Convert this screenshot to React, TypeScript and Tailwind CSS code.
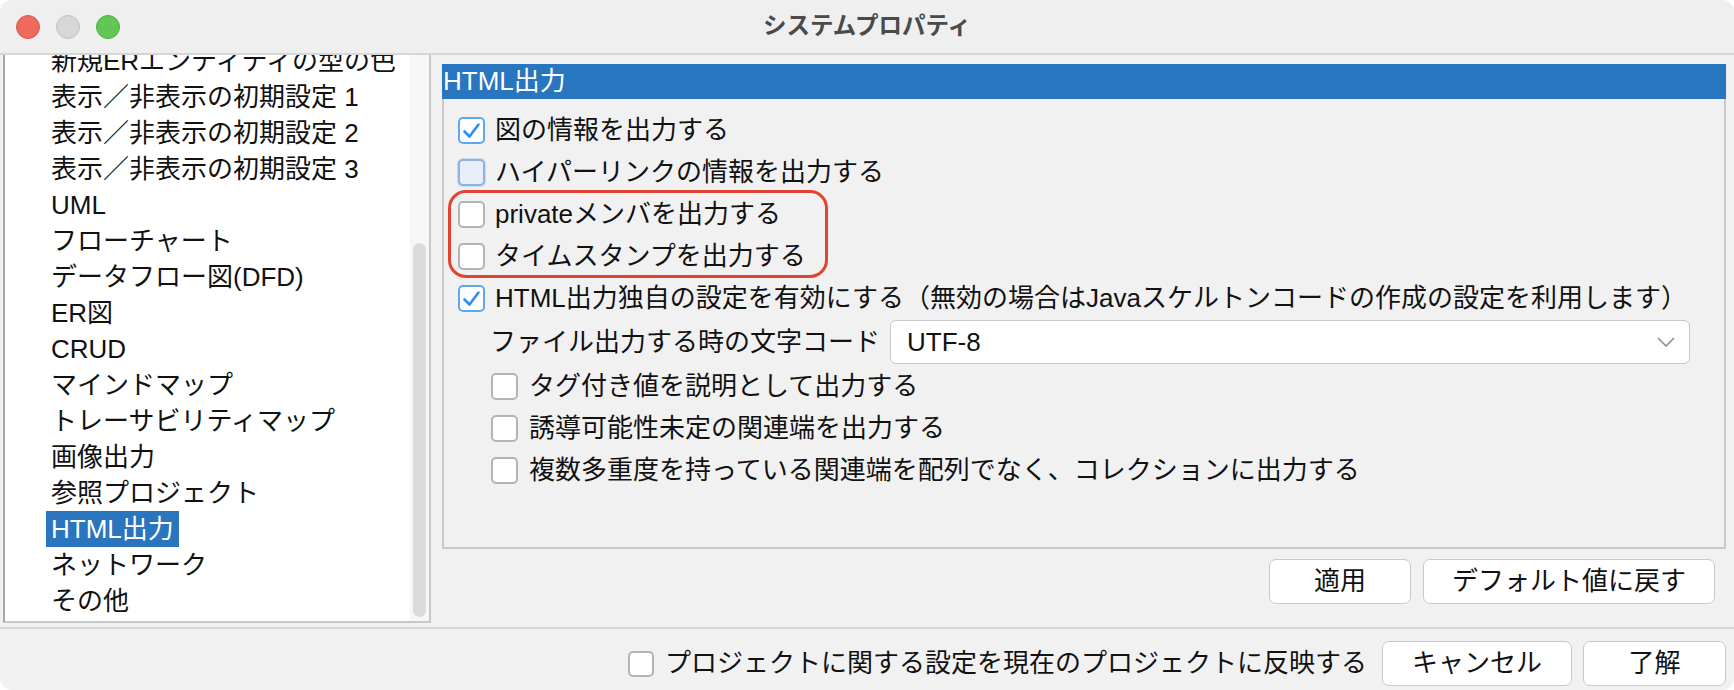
import React from "react";

const FONT = { fontFamily: '"Liberation Sans", "Noto Sans CJK JP", sans-serif' };

const listItems = [
  "新規ERエンティティの型の色",
  "表示／非表示の初期設定 1",
  "表示／非表示の初期設定 2",
  "表示／非表示の初期設定 3",
  "UML",
  "フローチャート",
  "データフロー図(DFD)",
  "ER図",
  "CRUD",
  "マインドマップ",
  "トレーサビリティマップ",
  "画像出力",
  "参照プロジェクト",
  "HTML出力",
  "ネットワーク",
  "その他",
];

function Check() {
  return (
    <svg width="19" height="17" viewBox="0 0 19 17" fill="none">
      <path d="M2.5 9.5 L7.5 14.5 L16.5 2.5" stroke="#2f8cf0" strokeWidth="2.6" strokeLinecap="round" strokeLinejoin="round" />
    </svg>
  );
}

function Box({ kind }: { kind: "checked" | "focus" | "plain" }) {
  if (kind === "checked") {
    return (
      <span className="w-[27px] h-[27px] shrink-0 rounded-[5px] border-2 border-[#5ea8f2] bg-white flex items-center justify-center">
        <Check />
      </span>
    );
  }
  if (kind === "focus") {
    return (
      <span className="w-[27px] h-[27px] shrink-0 rounded-[5px] border-2 border-[#8fb3de] bg-[#e8eff9] ring-1 ring-[#c9dbf0]" />
    );
  }
  return <span className="w-[27px] h-[27px] shrink-0 rounded-[5px] border-2 border-[#b4b4b4] bg-white" />;
}

function Row({ kind, text, indent }: { kind: "checked" | "focus" | "plain"; text: string; indent?: boolean }) {
  return (
    <div className={indent ? "h-[42px] flex items-center pl-[33px] gap-[11px]" : "h-[42px] flex items-center gap-[10px]"}>
      <Box kind={kind} />
      <span className="leading-[42px] whitespace-nowrap">{text}</span>
    </div>
  );
}

function Button({ label, w }: { label: string; w: string }) {
  return (
    <div
      className={
        "h-[45px] rounded-[7px] border-[1.5px] border-[#c8c8c8] bg-white flex items-center justify-center text-[#111] whitespace-nowrap " + w
      }
    >
      {label}
    </div>
  );
}

export default function App() {
  return (
    <div className="w-[1734px] h-[690px] bg-white overflow-hidden" style={FONT}>
      <div className="w-full h-full rounded-[12px] overflow-hidden bg-[#f1f1f1] flex flex-col text-[26px] text-[#111]">
        {/* title bar */}
        <div className="h-[55px] shrink-0 bg-[#efefef] border-b-2 border-[#d6d6d6] flex items-center">
          <div className="w-[120px] pl-[16px] flex items-center gap-[16px]">
            <span className="w-[24px] h-[24px] rounded-full bg-[#ee6a5f] border border-[#d85b50]" />
            <span className="w-[24px] h-[24px] rounded-full bg-[#d7d7d7] border border-[#c2c2c2]" />
            <span className="w-[24px] h-[24px] rounded-full bg-[#62c655] border border-[#53ad45]" />
          </div>
          <div className="flex-1 text-center font-bold text-[23.5px] text-[#4a4a4a] leading-[53px]">システムプロパティ</div>
          <div className="w-[120px]" />
        </div>

        {/* main */}
        <div className="h-[572px] shrink-0 flex">
          {/* left list */}
          <div className="ml-[3px] w-[428px] h-[568px] border-l-2 border-l-[#a9a9a9] border-r-2 border-r-[#c8c8c8] border-b-2 border-b-[#c8c8c8] flex">
            <div className="flex-1 bg-white overflow-hidden">
              <div className="-mt-[12px]">
                {listItems.map((t) => (
                  <div key={t} className="h-[36px] flex items-center">
                    {t === "HTML出力" ? (
                      <span className="ml-[41px] px-[5px] bg-[#2a75be] text-white leading-[36px] whitespace-nowrap">{t}</span>
                    ) : (
                      <span className="ml-[41px] px-[5px] leading-[36px] whitespace-nowrap">{t}</span>
                    )}
                  </div>
                ))}
              </div>
            </div>
            <div className="w-[19px] bg-[#f6f6f6] flex justify-center pt-[188px] pb-[4px]">
              <div className="w-[13px] h-full rounded-full bg-[#dadada]" />
            </div>
          </div>

          {/* right */}
          <div className="flex-1 flex flex-col pl-[11px] pr-[8px] pt-[9px]">
            <div className="h-[35px] bg-[#2876bf] text-white leading-[35px] pl-[1px] whitespace-nowrap">HTML出力</div>
            <div className="relative h-[450px] border-x-2 border-b-2 border-[#c9c9c9] pl-[14px] pt-[10px] flex flex-col">
              <Row kind="checked" text="図の情報を出力する" />
              <Row kind="focus" text="ハイパーリンクの情報を出力する" />
              <Row kind="plain" text="privateメンバを出力する" />
              <Row kind="plain" text="タイムスタンプを出力する" />
              <Row kind="checked" text="HTML出力独自の設定を有効にする（無効の場合はJavaスケルトンコードの作成の設定を利用します）" />
              <div className="h-[46px] flex items-center pl-[32px]">
                <span className="whitespace-nowrap leading-[46px]">ファイル出力する時の文字コード</span>
                <div className="ml-[10px] flex-1 mr-[34px] h-[44px] rounded-[6px] border-[1.5px] border-[#c8c8c8] bg-white flex items-center justify-between pl-[16px] pr-[14px]">
                  <span>UTF-8</span>
                  <svg width="18" height="10" viewBox="0 0 18 10" fill="none">
                    <path d="M1 1 L9 9 L17 1" stroke="#8a8a8a" strokeWidth="1.5" />
                  </svg>
                </div>
              </div>
              <Row kind="plain" indent text="タグ付き値を説明として出力する" />
              <Row kind="plain" indent text="誘導可能性未定の関連端を出力する" />
              <Row kind="plain" indent text="複数多重度を持っている関連端を配列でなく、コレクションに出力する" />
              <div className="absolute left-[4px] top-[91px] w-[380px] h-[88px] rounded-[18px] border-[3px] border-[#e4432f] pointer-events-none" />
            </div>
            <div className="mt-[10px] flex justify-end gap-[12px] pr-[11px]">
              <Button label="適用" w="w-[142px]" />
              <Button label="デフォルト値に戻す" w="w-[292px]" />
            </div>
          </div>
        </div>

        {/* bottom */}
        <div className="flex-1 border-t-2 border-[#d6d6d6] flex justify-end items-start pt-[12px] pr-[8px]">
          <div className="h-[45px] flex items-center">
            <span className="w-[26px] h-[26px] rounded-[5px] border-2 border-[#b4b4b4] bg-white shrink-0" />
            <span className="ml-[11px] whitespace-nowrap">プロジェクトに関する設定を現在のプロジェクトに反映する</span>
          </div>
          <div className="ml-[15px] flex gap-[11px]">
            <Button label="キャンセル" w="w-[190px]" />
            <Button label="了解" w="w-[143px]" />
          </div>
        </div>
      </div>
    </div>
  );
}
